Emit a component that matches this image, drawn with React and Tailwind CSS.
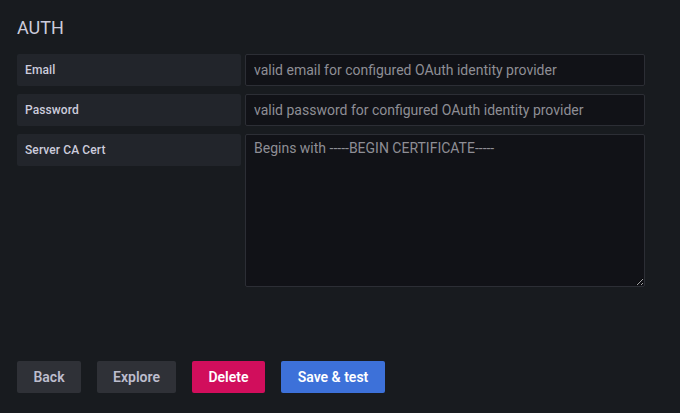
import React from "react";

const fields = [
  { label: "Email", placeholder: "valid email for configured OAuth identity provider" },
  { label: "Password", placeholder: "valid password for configured OAuth identity provider" },
];

export default function App() {
  return (
    <div
      className="w-[680px] h-[413px] bg-[#181b1f] px-[17px] pt-[16px] flex flex-col"
      style={{ fontFamily: "Roboto, 'Liberation Sans', sans-serif" }}
    >
      <h3 className="text-[18px] leading-[24px] text-[#ccccdc] mb-[14px]">AUTH</h3>
      <div className="flex flex-col gap-[8px]">
        {fields.map((f) => (
          <div key={f.label} className="flex gap-[4px]">
            <label className="w-[224px] h-[32px] bg-[#22252b] rounded-[2px] px-[8px] flex items-center text-[12px] font-medium tracking-[0.1px] text-[#ccccdc]">
              {f.label}
            </label>
            <input
              type="text"
              placeholder={f.placeholder}
              className="w-[400px] h-[32px] bg-[#111217] border border-[#2c2e35] rounded-[2px] px-[8px] text-[14px] text-[#ccccdc] placeholder:text-[#8e8e95] outline-none"
            />
          </div>
        ))}
        <div className="flex gap-[4px]">
          <label className="w-[224px] h-[32px] bg-[#22252b] rounded-[2px] px-[8px] flex items-center text-[12px] font-medium tracking-[0.1px] text-[#ccccdc]">
            Server CA Cert
          </label>
          <textarea
            placeholder="Begins with -----BEGIN CERTIFICATE-----"
            className="w-[400px] h-[153px] bg-[#111217] border border-[#2c2e35] rounded-[2px] px-[8px] py-[3px] text-[14px] leading-[20px] text-[#ccccdc] placeholder:text-[#8e8e95] outline-none"
          />
        </div>
      </div>
      <div className="flex gap-[16px] mt-[74px]">
        <button className="h-[32px] w-[64px] rounded-[2px] bg-[#2f3137] text-[#bdbdcd] text-[14px] font-semibold">Back</button>
        <button className="h-[32px] w-[79px] rounded-[2px] bg-[#2f3137] text-[#bdbdcd] text-[14px] font-semibold">Explore</button>
        <button className="h-[32px] w-[73px] rounded-[2px] bg-[#d10e5c] text-white text-[14px] font-semibold">Delete</button>
        <button className="h-[32px] w-[104px] rounded-[2px] bg-[#3d71d9] text-white text-[14px] font-semibold">Save &amp; test</button>
      </div>
    </div>
  );
}
